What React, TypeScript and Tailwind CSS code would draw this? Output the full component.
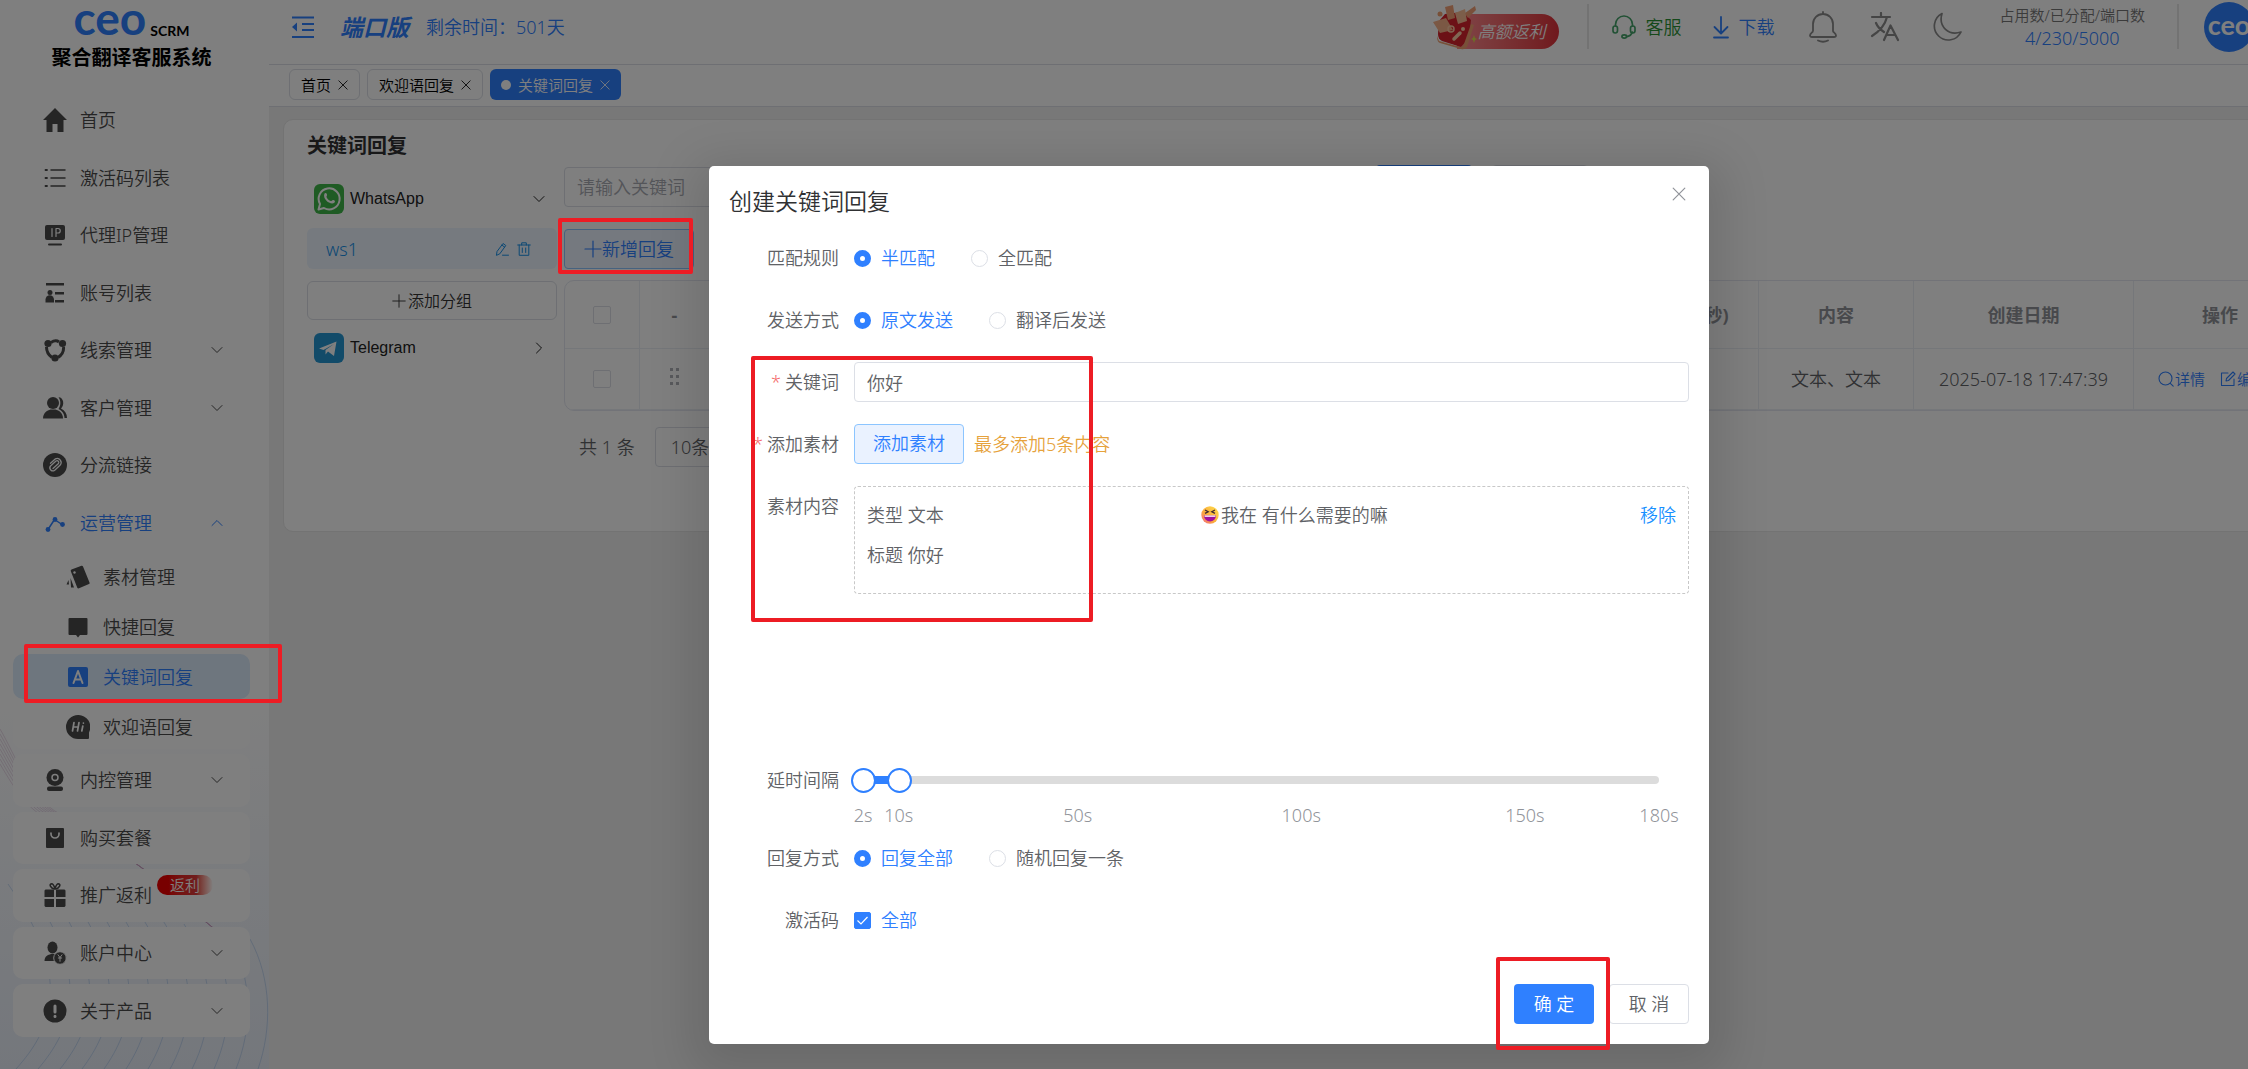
import React, { useState } from "react";
import clsx from "clsx";

type IconProps = { className?: string };

function Svg({ className, box = "0 0 24 24", children }: { className?: string; box?: string; children: React.ReactNode }) {
  return (
    <svg viewBox={box} className={clsx("shrink-0", className)} fill="none" stroke="currentColor" strokeLinecap="round" strokeLinejoin="round" aria-hidden="true">
      {children}
    </svg>
  );
}

const Chevron = ({ className }: IconProps) => (
  <Svg className={className} box="0 0 12 12"><path d="M1 3.5 6 8.5 11 3.5" strokeWidth="1" /></Svg>
);
const Plus = ({ className }: IconProps) => (
  <Svg className={className} box="0 0 18 18"><path d="M9 1V17M1 9H17" strokeWidth="1.2" /></Svg>
);
const Close = ({ className }: IconProps) => (
  <Svg className={className} box="0 0 12 12"><path d="M1 1 11 11M11 1 1 11" strokeWidth="1" /></Svg>
);
const Fold = ({ className }: IconProps) => (
  <Svg className={className}>
    <path d="M1 2.5H23M11 9H23M11 15H23M1 22H23" strokeWidth="2" strokeLinecap="butt" />
    <path d="M1 12 6 7.5V16.5Z" fill="currentColor" stroke="none" />
  </Svg>
);
const Edit = ({ className }: IconProps) => (
  <Svg className={className} box="0 0 14 14"><path d="M1.5 13 2 9.5 8 1.5 10.8 3.5 5 11.5ZM7 3.2 9.5 5M7.5 13.2H13.5" strokeWidth="1" /></Svg>
);
const Trash = ({ className }: IconProps) => (
  <Svg className={className} box="0 0 14 14"><path d="M.7 3H13.3M4.7 3V.8H9.3V3M2.2 3V13.3H11.8V3M5.3 6V10.5M8.7 6V10.5" strokeWidth="1" /></Svg>
);
const Search = ({ className }: IconProps) => (
  <Svg className={className} box="0 0 16 16"><circle cx="7.5" cy="7.5" r="6.5" strokeWidth="1.1" /><path d="M12.3 12.3 15.2 15.2" strokeWidth="1.1" /></Svg>
);
const EditBox = ({ className }: IconProps) => (
  <Svg className={className} box="0 0 16 16"><path d="M8 2H1.5V14.5H14V8M6 10 6.5 7.5 13 1 15 3 8.5 9.5Z" strokeWidth="1.1" /></Svg>
);
const Headset = ({ className }: IconProps) => (
  <Svg className={className}>
    <path d="M3.500 11V9.500A8.500 8.500 0 0 1 20.500 9.500V11M20.300 17C19.500 20 17.500 21.300 14.500 21.600" strokeWidth="1.700" />
    <rect x="1" y="11" width="4.500" height="7" rx="2.200" strokeWidth="1.700" />
    <rect x="18.500" y="11" width="4.500" height="7" rx="2.200" strokeWidth="1.700" />
    <ellipse cx="12.300" cy="21.500" rx="2.400" ry="1.600" strokeWidth="1.700" />
  </Svg>
);
const Download = ({ className }: IconProps) => (
  <Svg className={className} box="0 0 16 24"><path d="M8 2V18M1.500 12 8 18.500 14.500 12M1 22.500H15" strokeWidth="1.800" /></Svg>
);
const Bell = ({ className }: IconProps) => (
  <Svg className={className} box="0 0 28 32">
    <path d="M14 1V3M4 20V13A10 10 0 0 1 24 13V20C24 21.500 27 22 27 24.500C27 25.600 26 26 25 26H3C2 26 1 25.600 1 24.500C1 22 4 21.500 4 20M9 29.500C12 31 16 31 19 29.500" strokeWidth="1.800" />
  </Svg>
);
const Translate = ({ className }: IconProps) => (
  <Svg className={className} box="0 0 30 30">
    <path d="M2 5H20M11 1V5M17 5C15 13 10 19 2 24M6 11C8 16 11 18 14 20M14 28 20.500 13.500 28 28M16.500 23H25.500" strokeWidth="2.200" />
  </Svg>
);
const Moon = ({ className }: IconProps) => (
  <Svg className={className} box="0 0 30 30"><path d="M10 1.500A14 14 0 1 0 29 20C17 24 6 15 10 1.500Z" strokeWidth="1.700" /></Svg>
);

const icons: Record<string, React.ReactNode> = {
  home: <g fill="currentColor" stroke="none"><path d="M12 0 24 12H20.500V24H14.500V16H9.500V24H3.500V12H0Z" /></g>,
  list: <g><path d="M8 4H22M8 12H22M8 20H22" strokeWidth="1.500" /><path d="M2.500 4H4M2.500 12H4M2.500 20H4" strokeWidth="1.800" /></g>,
  ip: (
    <g>
      <rect x="2" y="2" width="20" height="15" rx="2" fill="currentColor" stroke="none" />
      <path d="M6 21.500H18" strokeWidth="2" />
      <path d="M9 5.500V13.500M13 13.500V5.500H15A2.200 2.200 0 0 1 15 10H13" stroke="#fff" strokeWidth="1.200" />
    </g>
  ),
  account: (
    <g fill="currentColor" stroke="none">
      <rect x="3" y="2" width="18" height="2.500" /><rect x="12" y="11" width="9" height="2.500" /><rect x="12" y="19" width="9" height="2.500" />
      <circle cx="7" cy="11.500" r="2.500" /><path d="M2.500 21.500V18.500A4 4 0 0 1 11 18.500V21.500Z" />
    </g>
  ),
  clue: (
    <g>
      <path d="M8 4.500C11 2.500 14 2.500 16 4M20.500 9C21 14 18 17.500 15 19.500M9 19.500C5.500 17 3.500 14 3.500 9" strokeWidth="3" strokeLinecap="butt" />
      <g fill="currentColor" stroke="none"><circle cx="5" cy="5.500" r="3.600" /><circle cx="19.500" cy="5.500" r="3.600" /><circle cx="12" cy="20" r="3.600" /></g>
    </g>
  ),
  customer: (
    <g fill="currentColor" stroke="none">
      <circle cx="10" cy="7" r="6" /><path d="M0 22.500C0 17 4 14.500 7.500 13.500H12.500C16 14.500 20 17 20 22.500Z" />
      <path d="M15.500 1.200C20.500 1 22 9 18 12.500C22 14.500 24 18 24 22H21.500C21.500 18 19 14.500 15.500 13C18 9 18 4.500 15.500 1.200Z" />
    </g>
  ),
  link: (
    <g>
      <circle cx="12" cy="12" r="12" fill="currentColor" stroke="none" />
      <path d="M10 15.500 15.500 10.500A1.800 1.800 0 0 0 13 8L7.500 13A3 3 0 0 0 11.700 17.200L17 12.200A4 4 0 0 0 12.500 5.800L7.500 10.200" stroke="#fff" strokeWidth="1.300" />
    </g>
  ),
  operate: (
    <g>
      <path d="M5 18.500 11.500 8.500 19 13.500" strokeWidth="1.500" />
      <g fill="currentColor" stroke="none"><circle cx="5" cy="18.500" r="2.400" /><circle cx="12" cy="8.500" r="2.400" /><circle cx="19.500" cy="13.500" r="2.400" /></g>
    </g>
  ),
  material: (
    <g fill="currentColor" stroke="none">
      <path d="M5.500 4.500 15.500 .8Q16.500 .4 17 1.500L23.500 17.500Q24 18.500 23 19L13 23.300Q11.800 23.800 11.300 22.700L4.800 6.200Q4.300 5 5.500 4.500Z" />
      <path d="M4.500 13 8 22.500H5ZM2.500 15 3 19.500H.5Z" />
      <circle cx="8.500" cy="7.500" r="1.200" fill="#fff" />
    </g>
  ),
  quick: <g fill="currentColor" stroke="none"><path d="M3.500 3H20.500Q21.500 3 21.500 4V19Q21.500 20 20.500 20H14L12 22.500 10 20H3.500Q2.500 20 2.500 19V4Q2.500 3 3.500 3Z" /></g>,
  keyword: (
    <g>
      <rect x="2" y="2" width="20" height="20" rx="2" fill="currentColor" stroke="none" />
      <path d="M7.500 18 12 6 16.500 18M9 14.500H15" stroke="#fff" strokeWidth="2" />
    </g>
  ),
  welcome: (
    <g>
      <path d="M12 0A12 12 0 1 0 12 24H22Q23 24 23 23V17.500A12 12 0 0 0 12 0Z" fill="currentColor" stroke="none" />
      <path d="M8 7.500 6.500 16M13 7.500 11.500 16M7.500 12H12M16.800 11 15.800 16M17.400 8V8.100" stroke="#fff" strokeWidth="1.700" />
    </g>
  ),
  webcam: (
    <g>
      <circle cx="12" cy="9.500" r="8.500" fill="currentColor" stroke="none" />
      <circle cx="12" cy="9.500" r="3" stroke="#fff" strokeWidth="1.500" />
      <rect x="4" y="18.500" width="16" height="4.500" rx="2" fill="currentColor" stroke="none" />
    </g>
  ),
  shop: (
    <g>
      <rect x="3" y="2" width="18" height="20" rx="1" fill="currentColor" stroke="none" />
      <path d="M8 7V8A4 4 0 0 0 16 8V7" stroke="#fff" strokeWidth="1.700" />
    </g>
  ),
  gift: (
    <g>
      <path d="M11.500 6C8 6 5.500 1 8.500 .8C10.500 .8 11.500 4 12 6C12.500 4 13.500 .8 15.500 .8C18.500 1 16 6 12.500 6" strokeWidth="1.600" />
      <path d="M2.500 6.500H11V14H1.500V7.500ZM13 6.500H21.500L22.500 7.500V14H13ZM1.500 16H11V24H2.500L1.500 23ZM13 16H22.500V23L21.500 24H13Z" fill="currentColor" stroke="none" />
    </g>
  ),
  user: (
    <g>
      <g fill="currentColor" stroke="none"><ellipse cx="9.500" cy="6.500" rx="5" ry="6" /><path d="M1.500 20C1.500 15 5 14 8 13H12L14 20Z" /></g>
      <circle cx="17" cy="17" r="6.300" fill="currentColor" stroke="#fff" strokeWidth="1" />
      <path d="M15 13.800 17 16.500 19 13.800M17 16.500V20.300M15.300 17H18.700" stroke="#fff" strokeWidth="1" />
    </g>
  ),
  about: (
    <g>
      <circle cx="12" cy="12" r="11.500" fill="currentColor" stroke="none" />
      <path d="M12 7V13M12 17.300V17.400" stroke="#fff" strokeWidth="3" />
    </g>
  ),
};

type NavItem = { icon: string; label: string; arrow?: "down" | "up"; sub?: boolean; active?: boolean; badge?: string };

const topNav: NavItem[] = [
  { icon: "home", label: "首页" },
  { icon: "list", label: "激活码列表" },
  { icon: "ip", label: "代理IP管理" },
  { icon: "account", label: "账号列表" },
  { icon: "clue", label: "线索管理", arrow: "down" },
  { icon: "customer", label: "客户管理", arrow: "down" },
  { icon: "link", label: "分流链接" },
  { icon: "operate", label: "运营管理", arrow: "up" },
];
const subNav: NavItem[] = [
  { icon: "material", label: "素材管理", sub: true },
  { icon: "quick", label: "快捷回复", sub: true },
  { icon: "keyword", label: "关键词回复", sub: true, active: true },
  { icon: "welcome", label: "欢迎语回复", sub: true },
];
const bottomNav: NavItem[] = [
  { icon: "webcam", label: "内控管理", arrow: "down" },
  { icon: "shop", label: "购买套餐" },
  { icon: "gift", label: "推广返利", badge: "返利" },
  { icon: "user", label: "账户中心", arrow: "down" },
  { icon: "about", label: "关于产品", arrow: "down" },
];

function NavLink({ icon, label, arrow, sub, active, badge }: NavItem) {
  return (
    <a
      href="#"
      className={clsx(
        "relative flex items-center gap-[13px] rounded-[10px] pr-[27px]",
        sub ? "h-[45px] pl-[53px]" : "pl-[30px]",
        active ? "bg-[#dcecfc]" : "bg-white",
        active || arrow === "up" ? "text-[#2f80ff]" : "text-[#4a4a4a]"
      )}
    >
      <Svg className="size-6">{icons[icon]}</Svg>
      <span>{label}</span>
      {arrow && <Chevron className={clsx("ml-auto size-3", arrow === "up" && "rotate-180")} />}
      {badge && (
        <span className="absolute top-[6px] left-[144px] flex h-5 w-14 items-center justify-center rounded-full bg-linear-to-r from-[#f00000] from-20% via-[#e03a3a] via-70% to-white text-[15px] leading-5 text-white">
          {badge}
        </span>
      )}
    </a>
  );
}

function SidebarWaves() {
  return (
    <svg className="absolute bottom-0 left-0 h-[400px] w-full" viewBox="0 0 269 400" fill="none" preserveAspectRatio="none" aria-hidden="true">
      <g stroke="#c99bc0" strokeOpacity=".35">
        {[0, 5, 10, 15, 20, 25, 30, 35].map((d) => (
          <path key={d} d={`M0 ${60 + d}C15 ${85 + d} 30 ${130 + d / 2} 60 ${145 + d / 4}S130 190 150 205S200 250 225 268`} />
        ))}
      </g>
      <g stroke="#a9c4ea" strokeOpacity=".6">
        {[0, 1, 2, 3, 4, 5, 6, 7, 8, 9, 10, 11].map((i) => (
          <path key={i} d={`M${250 - i * 22} ${270 - i * 5}C${272 - i * 18} 310 ${272 - i * 20} 360 ${258 - i * 22} 400`} />
        ))}
      </g>
    </svg>
  );
}

function Sidebar() {
  return (
    <aside className="relative h-full w-[269px] shrink-0 bg-linear-to-b from-white from-65% to-[#e9eff9]">
      <SidebarWaves />
      <div className="relative flex h-[94px] flex-col items-center pr-[6px]">
        <div className="flex h-11 items-start gap-1">
          <span className="font-['Lato',sans-serif] text-[46px] leading-9 font-bold text-[#2f80ff]">ceo</span>
          <span className="pt-[17px] font-['Lato',sans-serif] text-[14px] leading-7 font-bold text-black">SCRM</span>
        </div>
        <span className="text-[20px] leading-7 font-bold text-black">聚合翻译客服系统</span>
      </div>
      <nav className="relative flex flex-col gap-[5px] pr-[19px] pl-[13px]">
        <div className="grid h-[455px] auto-rows-fr gap-[5px]">{topNav.map((n) => <NavLink key={n.label} {...n} />)}</div>
        <div className="grid gap-[5px]">{subNav.map((n) => <NavLink key={n.label} {...n} />)}</div>
        <div className="grid h-[283px] auto-rows-fr gap-[5px]">{bottomNav.map((n) => <NavLink key={n.label} {...n} />)}</div>
      </nav>
    </aside>
  );
}

function Promo() {
  return (
    <button type="button" className="relative flex h-[45px] w-[126px] items-end">
      <span className="ml-6 flex h-[35px] flex-1 items-center justify-end rounded-r-full bg-linear-to-r from-[#ff8a90] to-[#e0303a] pr-[13px] text-[17px] text-white italic">高额返利</span>
      <svg viewBox="0 0 44 46" className="absolute top-0 left-0 h-[46px] w-[44px]" aria-hidden="true">
        <path d="M6 17 12 10 30 8 38 16 36 34 28 43 9 37Q5 35 5 30Z" fill="#d9232c" />
        <path d="M4 32 6 37 27 43Q30 43 31 40L38 20 41 21 34 43Q32 46 28 45L7 39Q4 38 4 32Z" fill="#f0a070" />
        <path d="M0 18 13 14 20 26 7 29Z" fill="#f7b088" />
        <path d="M12 3 20 1 22 14 15 16Z" fill="#f3a176" />
        <path d="M22 9 32 5 34 17 25 20Z" fill="#f9bd95" />
        <path d="M32 9 42 2 43 6 35 14Z" fill="#f3a176" />
        <circle cx="18" cy="25" r="3" fill="none" stroke="#ffc9a2" strokeWidth="1.500" />
        <path d="M21 35 27 29" stroke="#ffd0a8" strokeWidth="3.500" strokeLinecap="round" />
        <circle cx="30" cy="25" r="2" fill="#ffd0a8" />
        <circle cx="7" cy="10" r="2.500" fill="#f0a070" />
        <path d="M41 31 42 34 44 35 42 36 41 39 40 36 38 35 40 34Z" fill="#d7e04a" />
      </svg>
    </button>
  );
}

function Header() {
  return (
    <header className="h-[65px] border-b border-[#dcdfe6] bg-white">
      <div className="flex h-[53px] items-center pr-[164px] pl-[22px]">
        <button type="button" aria-label="收起菜单" className="text-[#2f80ff]"><Fold className="size-6" /></button>
        <span className="ml-[25px] text-[23px] font-bold text-[#2f80ff] italic">端口版</span>
        <span className="ml-[17px] text-[#2f80ff]">剩余时间：501天</span>
        <div className="ml-auto flex items-center">
          <Promo />
          <i className="ml-7 h-[45px] w-0.5 bg-[#e6e6e6]" />
          <a href="#" className="ml-[23px] flex items-center gap-[10px] text-[#2a9235]"><Headset className="size-6 text-[#45a36a]" />客服</a>
          <a href="#" className="ml-[31px] flex items-center gap-[10px] text-[#2f80ff]"><Download className="h-6 w-4" />下载</a>
          <button type="button" aria-label="通知" className="ml-[34px] text-[#8a8a8a]"><Bell className="h-8 w-7" /></button>
          <button type="button" aria-label="语言" className="ml-[33px] text-[#8a8a8a]"><Translate className="size-[30px]" /></button>
          <button type="button" aria-label="深色模式" className="ml-8 text-[#8a8a8a]"><Moon className="size-[30px]" /></button>
          <div className="ml-[38px] flex flex-col items-center">
            <span className="text-[15px] leading-[22px] text-[#777]">占用数/已分配/端口数</span>
            <span className="leading-6 text-[#2f80ff]">4/230/5000</span>
          </div>
          <i className="ml-8 h-[45px] w-0.5 bg-[#e6e6e6]" />
          <span className="ml-[25px] flex size-[50px] items-center justify-center rounded-full bg-[#2f80ff] pb-1 font-['Lato',sans-serif] text-[27px] font-bold text-white">ceo</span>
        </div>
      </div>
    </header>
  );
}

function Tabs() {
  return (
    <div className="flex h-[42px] items-center gap-[7px] border-b border-[#dcdfe6] bg-white pb-1.5 pt-1 pl-5 text-[15px]">
      <a href="#" className="flex h-[31px] items-center gap-[7px] rounded-md border border-[#dcdfe6] px-[11px] text-black">首页<Close className="size-2.5" /></a>
      <a href="#" className="flex h-[31px] items-center gap-[7px] rounded-md border border-[#dcdfe6] px-[11px] text-black">欢迎语回复<Close className="size-2.5" /></a>
      <a href="#" className="flex h-[31px] items-center gap-[7px] rounded-md bg-[#2f80ff] px-[11px] text-white">
        <i className="size-2.5 rounded-full bg-white" />关键词回复<Close className="size-2.5" />
      </a>
    </div>
  );
}

function Groups() {
  return (
    <div className="w-[250px] shrink-0">
      <button type="button" className="flex h-[63px] w-full items-center pt-1 pr-3 pl-[7px] font-['Liberation_Sans',sans-serif] text-[16px] text-[#222]">
        <svg viewBox="0 0 30 30" className="size-[30px]" aria-hidden="true">
          <rect width="30" height="30" rx="6" fill="#3fb649" />
          <path d="M4.500 25.500 6 20A10.500 10.500 0 1 1 10 24Z" fill="none" stroke="#fff" strokeWidth="2" strokeLinejoin="round" />
          <path d="M10.500 9.500C11.500 8.300 12.700 9 13 10.500C13.300 12 12 12.300 12.700 13.500C13.700 15.300 15 16.500 16.800 17C17.800 17.300 18 15.600 19.500 16C21.300 16.600 21.300 17.700 20.300 18.800C17 21.500 8 15.500 10.500 9.500Z" fill="#fff" />
        </svg>
        <span className="ml-[6px]">WhatsApp</span>
        <Chevron className="ml-auto size-3" />
      </button>
      <div className="flex h-[41px] items-center rounded-md bg-[#ecf5ff] pr-[26px] pl-[19px] text-[#1890e8]">
        <span>ws1</span>
        <button type="button" aria-label="编辑" className="ml-auto"><Edit className="size-3.5" /></button>
        <button type="button" aria-label="删除" className="ml-2"><Trash className="size-3.5" /></button>
      </div>
      <button type="button" className="mt-3 flex h-[39px] w-full items-center justify-center gap-0.5 rounded-md border border-[#dcdfe6] text-[16px] text-[#333]">
        <Plus className="size-3.5" />添加分组
      </button>
      <button type="button" className="mt-1 flex h-12 w-full items-center pr-3 pl-[7px] font-['Liberation_Sans',sans-serif] text-[16px] text-[#222]">
        <svg viewBox="0 0 30 30" className="size-[30px]" aria-hidden="true">
          <rect width="30" height="30" rx="6" fill="#2496d2" />
          <path d="M5 15.500 22.500 8.500 20 23 14 18.500 11.500 21.500V17L20 11 9.500 17Z" fill="#fff" />
        </svg>
        <span className="ml-[6px]">Telegram</span>
        <Chevron className="ml-auto size-3 -rotate-90" />
      </button>
    </div>
  );
}

const cell = "border-r border-b border-[#ebeef5] last:border-r-0";

function ReplyTable() {
  return (
    <div className="mt-[11px] overflow-hidden rounded-[10px] border border-[#e4e7f0]">
      <table className="w-full table-fixed border-separate border-spacing-0 text-center">
        <colgroup>
          <col className="w-[75px]" /><col className="w-[70px]" /><col />
          <col className="w-[162px]" /><col className="w-[155px]" /><col className="w-[220px]" /><col className="w-[172px]" />
        </colgroup>
        <thead>
          <tr className="h-[68px] text-[#909399]">
            <th className={cell}><input type="checkbox" aria-label="全选" className="block mx-auto size-[18px] appearance-none rounded-xs border border-[#dcdfe6]" /></th>
            <th className={cell}>-</th>
            <th className={cell}></th>
            <th className={cell}>延时间隔(秒)</th>
            <th className={cell}>内容</th>
            <th className={cell}>创建日期</th>
            <th className={cell}>操作</th>
          </tr>
        </thead>
        <tbody>
          <tr className="h-[61px] text-[#606266]">
            <td className={cell}><input type="checkbox" aria-label="选择" className="block mx-auto size-[18px] appearance-none rounded-xs border border-[#dcdfe6]" /></td>
            <td className={cell}>
              <svg viewBox="0 0 10 18" className="mx-auto mb-1 h-[18px] w-2.5 fill-[#b0b3b8]" aria-hidden="true">
                <path d="M0 0h3v3H0zM6 0h3v3H6zM0 7h3v3H0zM6 7h3v3H6zM0 14h3v3H0zM6 14h3v3H6z" />
              </svg>
            </td>
            <td className={cell}></td>
            <td className={cell}></td>
            <td className={cell}>文本、文本</td>
            <td className={cell}>2025-07-18 17:47:39</td>
            <td className={cell}>
              <div className="flex gap-[15px] pl-6 text-[15px] text-[#2f80ff]">
                <a href="#" className="flex items-center gap-px"><Search className="size-4" />详情</a>
                <a href="#" className="flex items-center gap-px"><EditBox className="size-4" />编辑</a>
              </div>
            </td>
          </tr>
        </tbody>
      </table>
    </div>
  );
}

function KeywordPage() {
  return (
    <main className="flex-1 bg-[#f0f0f0] pt-3 pr-[86px] pl-[14px]">
      <section className="h-[413px] rounded-[10px] border border-[#e6e6e6] bg-white pr-6 pl-[23px]">
        <h1 className="h-[45px] pt-3 text-[20px] leading-7 font-bold text-[#303133]">关键词回复</h1>
        <div className="flex gap-[7px]">
          <Groups />
          <div className="min-w-0 flex-1">
            <div className="flex h-11 items-center">
              <input aria-label="关键词搜索" placeholder="请输入关键词" className="h-10 w-[300px] rounded border border-[#dcdfe6] px-3 placeholder:text-[#a8abb2]" />
              <button type="button" className="ml-[512px] h-11 w-24 rounded bg-[#2f80ff]" aria-label="搜索" />
              <button type="button" className="ml-5 h-11 w-24 rounded border border-[#dcdfe6]" aria-label="重置" />
            </div>
            <button type="button" className="mt-5 flex h-10 w-[130px] items-center justify-center rounded border border-[#8cc5ff] bg-[#eaf2ff] text-[#2f80ff]">
              <Plus className="size-[18px]" />新增回复
            </button>
            <ReplyTable />
            <div className="mt-4 flex items-center pl-[15px] text-[#606266]">
              <span>共 1 条</span>
              <select aria-label="每页条数" className="ml-5 h-10 w-[160px] appearance-none rounded border border-[#dcdfe6] px-[15px]">
                <option>10条/页</option>
              </select>
            </div>
          </div>
        </div>
      </section>
    </main>
  );
}

function Row({ label, required, htmlFor, children }: { label: string; required?: boolean; htmlFor?: string; children: React.ReactNode }) {
  const Tag = htmlFor ? "label" : "span";
  return (
    <div className="mb-[22px] flex">
      <Tag htmlFor={htmlFor} className="w-[125px] shrink-0 pr-[15px] text-right leading-10 whitespace-nowrap">
        {required && <span className="mr-1 text-[#f56c6c]">*</span>}
        {label}
      </Tag>
      <div className="min-w-0 flex-1">{children}</div>
    </div>
  );
}

function RadioGroup({ name, options }: { name: string; options: string[] }) {
  const [value, setValue] = useState(options[0]);
  return (
    <div className="flex h-10 items-center gap-9" role="radiogroup" aria-label={name}>
      {options.map((o) => (
        <label key={o} className={clsx("flex items-center gap-[10px]", value === o && "text-[#2f80ff]")}>
          <input
            type="radio"
            name={name}
            checked={value === o}
            onChange={() => setValue(o)}
            className="size-[17px] appearance-none rounded-full border border-[#dcdfe6] bg-white checked:border-[6px] checked:border-[#2f80ff]"
          />
          {o}
        </label>
      ))}
    </div>
  );
}

const MIN = 2;
const MAX = 180;
const marks = [2, 10, 50, 100, 150, 180];
const toPercent = (v: number) => ((v - MIN) / (MAX - MIN)) * 100;

const thumb =
  "pointer-events-none absolute top-2 -left-[12px] h-6 w-[calc(100%+25px)] appearance-none bg-transparent [&::-webkit-slider-thumb]:pointer-events-auto [&::-webkit-slider-thumb]:size-[25px] [&::-webkit-slider-thumb]:appearance-none [&::-webkit-slider-thumb]:rounded-full [&::-webkit-slider-thumb]:border-2 [&::-webkit-slider-thumb]:border-[#2f80ff] [&::-webkit-slider-thumb]:bg-white";

function DelaySlider() {
  const [range, setRange] = useState([2, 10]);
  return (
    <div className="relative mr-[30px] ml-[9px] h-14">
      <div className="absolute top-4 h-2 w-full rounded-full bg-[#dcdcdc]" />
      <div className="absolute top-4 h-2 bg-[#2f80ff]" style={{ left: `${toPercent(range[0])}%`, width: `${toPercent(range[1]) - toPercent(range[0])}%` }} />
      <input type="range" aria-label="最小延时" min={MIN} max={MAX} value={range[0]} onChange={(e) => setRange([+e.target.value, range[1]])} className={thumb} />
      <input type="range" aria-label="最大延时" min={MIN} max={MAX} value={range[1]} onChange={(e) => setRange([range[0], +e.target.value])} className={thumb} />
      {marks.map((m) => (
        <span key={m} className="absolute top-[43px] -translate-x-1/2 leading-6 text-[#909399]" style={{ left: `${toPercent(m)}%` }}>{m}s</span>
      ))}
    </div>
  );
}

function Laugh() {
  return (
    <svg viewBox="0 0 18 18" className="size-[18px]" role="img" aria-label="笑">
      <defs>
        <linearGradient id="face" x1="1" y1="0" x2="0" y2="1">
          <stop offset="0" stopColor="#ffe14d" /><stop offset=".6" stopColor="#fbab3c" /><stop offset="1" stopColor="#f0608a" />
        </linearGradient>
      </defs>
      <circle cx="9" cy="9" r="8.700" fill="url(#face)" />
      <path d="M4 4 7.200 5.700 4 7.400M14 4 10.800 5.700 14 7.400" fill="none" stroke="#402a32" strokeWidth="1.300" />
      <path d="M3 9.500H15A6 6 0 0 1 3 9.500Z" fill="#a0109c" />
      <path d="M3.600 9.500H14.400V10.800H3.600Z" fill="#fff" />
    </svg>
  );
}

function CreateDialog() {
  const [keyword, setKeyword] = useState("你好");
  const [all, setAll] = useState(true);
  return (
    <div role="dialog" aria-label="创建关键词回复" className="relative w-[1000px] rounded-[5px] bg-white px-5 pb-5 text-[#606266] shadow-[0_12px_48px_16px_rgba(0,0,0,0.12)]">
      <h2 className="h-[72px] pt-[19px] text-[23px] leading-8 text-[#303133]">创建关键词回复</h2>
      <button type="button" aria-label="关闭" className="absolute top-[21px] right-[23px] text-[#909399]"><Close className="size-3.5" /></button>
      <form>
        <Row label="匹配规则"><RadioGroup name="匹配规则" options={["半匹配", "全匹配"]} /></Row>
        <Row label="发送方式"><RadioGroup name="发送方式" options={["原文发送", "翻译后发送"]} /></Row>
        <Row label="关键词" required htmlFor="keyword">
          <input id="keyword" value={keyword} onChange={(e) => setKeyword(e.target.value)} className="h-10 w-full rounded border border-[#dcdfe6] px-3 text-[#606266]" />
        </Row>
        <Row label="添加素材" required>
          <div className="flex items-center gap-[10px]">
            <button type="button" className="h-10 rounded border border-[#8cc5ff] bg-[#eaf2ff] px-[18px] pb-0.5 text-[#2f80ff]">添加素材</button>
            <span className="text-[#e6a23c]">最多添加5条内容</span>
          </div>
        </Row>
        <Row label="素材内容">
          <div className="h-[252px]">
            <div className="flex h-[108px] rounded border border-dashed border-[#c8c8c8] px-3 pt-2 leading-10">
              <div className="w-[334px]">
                <p>类型 文本</p>
                <p>标题 你好</p>
              </div>
              <p className="flex h-10 flex-1 items-center gap-0.5"><Laugh />我在 有什么需要的嘛</p>
              <a href="#" className="text-[#1890ff]">移除</a>
            </div>
          </div>
        </Row>
        <Row label="延时间隔"><DelaySlider /></Row>
        <Row label="回复方式"><RadioGroup name="回复方式" options={["回复全部", "随机回复一条"]} /></Row>
        <Row label="激活码">
          <label className="flex h-10 w-fit items-center gap-[10px] text-[#2f80ff]">
            <span className="relative flex">
              <input type="checkbox" checked={all} onChange={() => setAll(!all)} className="size-[17px] appearance-none rounded-xs border border-[#dcdfe6] checked:border-[#2f80ff] checked:bg-[#2f80ff]" />
              <svg viewBox="0 0 17 17" className="pointer-events-none absolute inset-0 size-[17px]" fill="none" stroke="#fff" aria-hidden="true"><path d="M3.500 8.500 7 12 13.500 5" strokeWidth="1.200" /></svg>
            </span>
            全部
          </label>
        </Row>
        <div className="flex justify-end gap-[15px] pt-[22px]">
          <button type="button" className="h-10 w-20 rounded bg-[#2f80ff] text-white">确 定</button>
          <button type="button" className="h-10 w-20 rounded border border-[#dcdfe6] bg-white">取 消</button>
        </div>
      </form>
    </div>
  );
}

export default function App() {
  return (
    <div className="relative h-screen overflow-hidden font-['Noto_Sans','Noto_Sans_CJK_SC',sans-serif] text-[18px] leading-6 font-[350]">
      <div className="relative flex h-full w-[calc(100%+170px)]">
        <Sidebar />
        <div className="flex min-w-0 flex-1 flex-col">
          <Header />
          <Tabs />
          <KeywordPage />
        </div>
        <div className="absolute inset-0 flex items-start justify-center bg-black/50 pt-[166px]">
          <CreateDialog />
        </div>
      </div>

      {/* step markers */}
      <div className="pointer-events-none absolute top-[644px] left-[24px] h-[59px] w-[258px] rounded-xs border-4 border-[#ed1c24]" />
      <div className="pointer-events-none absolute top-[218px] left-[558px] h-[56px] w-[135px] rounded-xs border-4 border-[#ed1c24]" />
      <div className="pointer-events-none absolute top-[356px] left-[751px] h-[266px] w-[342px] rounded-xs border-4 border-[#ed1c24]" />
      <div className="pointer-events-none absolute top-[957px] left-[1496px] h-[93px] w-[114px] rounded-xs border-4 border-[#ed1c24]" />
    </div>
  );
}
